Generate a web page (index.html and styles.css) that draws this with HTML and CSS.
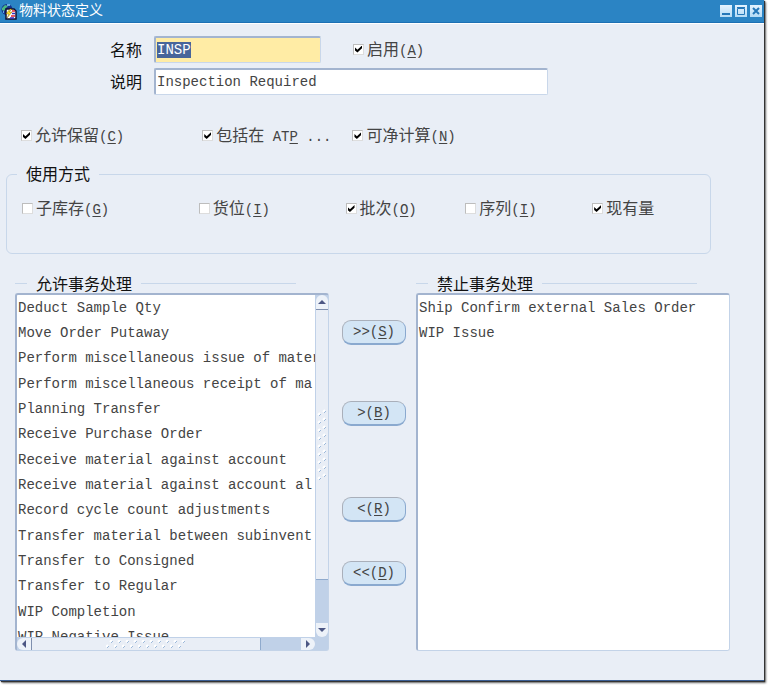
FILE: index.html
```html
<!DOCTYPE html>
<html lang="zh-CN">
<head>
<meta charset="utf-8">
<meta name="viewport" content="width=device-width, initial-scale=1">
<title>物料状态定义</title>
<link rel="stylesheet" href="styles.css">
</head>
<body>
<main class="window">
  <header class="titlebar">
    <svg class="app-icon" viewBox="0 0 16 17" aria-hidden="true">
      <circle cx="6" cy="6.500" r="5.500" fill="#16318c"/>
      <path d="M1 5l3-3 3 1-2 2-2 3-2-1z" fill="#49b882"/>
      <path d="M6 2h3M2 9h1" stroke="#7fd0ff" stroke-width="1.500"/>
      <path d="M5 6h8l2 2v8H5z" fill="#fff" stroke="#101030" stroke-width="1.500"/>
      <path d="M9 6l-4 5h3l-2 4 5-6H8l3-3z" fill="#ffe12b" stroke="#6a5000" stroke-width=".4"/>
      <path d="M11 8h3M10 13h4" stroke="#e02030" stroke-width="1.500"/>
      <path d="M11 10.500h3M9 15h4" stroke="#3030c0" stroke-width="1.300"/>
    </svg>
    <h1 class="title">物料状态定义</h1>
    <div class="window-buttons">
      <button type="button" aria-label="最小化"><svg viewBox="0 0 12 12"><path d="M2 9h8" stroke="#2577b8" stroke-width="2"/></svg></button>
      <button type="button" aria-label="最大化"><svg viewBox="0 0 12 12"><path d="M2.500 3.500h7v6h-7zM2 2.500h8" fill="none" stroke="#2577b8"/></svg></button>
      <button type="button" aria-label="关闭"><svg viewBox="0 0 12 12"><path d="M3 3l6 6M9 3l-6 6" stroke="#2577b8" stroke-width="2"/></svg></button>
    </div>
  </header>

  <form class="content">
    <div class="fields">
      <label class="field-label" for="name">名称</label>
      <div class="field-line">
        <input class="text-field name-field" id="name" type="text" value="INSP">
        <label class="check"><input type="checkbox" checked><span>启用<span class="key">(<u>A</u>)</span></span></label>
      </div>
      <label class="field-label" for="desc">说明</label>
      <input class="text-field" id="desc" type="text" value="Inspection Required">
    </div>

    <div class="options">
      <label class="check"><input type="checkbox" checked><span>允许保留<span class="key">(<u>C</u>)</span></span></label>
      <label class="check"><input type="checkbox" checked><span>包括在<span class="key"> AT<u>P</u> ...</span></span></label>
      <label class="check"><input type="checkbox" checked><span>可净计算<span class="key">(<u>N</u>)</span></span></label>
    </div>

    <fieldset class="usage">
      <legend>使用方式</legend>
      <div class="usage-row">
        <label class="check"><input type="checkbox"><span>子库存<span class="key">(<u>G</u>)</span></span></label>
        <label class="check"><input type="checkbox"><span>货位<span class="key">(<u>I</u>)</span></span></label>
        <label class="check"><input type="checkbox" checked><span>批次<span class="key">(<u>O</u>)</span></span></label>
        <label class="check"><input type="checkbox"><span>序列<span class="key">(<u>I</u>)</span></span></label>
        <label class="check"><input type="checkbox" checked><span>现有量</span></label>
      </div>
    </fieldset>

    <div class="transfer">
      <section class="panel">
        <h2 class="panel-title">允许事务处理</h2>
        <div class="list-box scrolling">
          <ul class="list long-list">
            <li>Deduct Sample Qty</li>
            <li>Move Order Putaway</li>
            <li>Perform miscellaneous issue of mater</li>
            <li>Perform miscellaneous receipt of ma</li>
            <li>Planning Transfer</li>
            <li>Receive Purchase Order</li>
            <li>Receive material against account</li>
            <li>Receive material against account al</li>
            <li>Record cycle count adjustments</li>
            <li>Transfer material between subinvent</li>
            <li>Transfer to Consigned</li>
            <li>Transfer to Regular</li>
            <li>WIP Completion</li>
            <li>WIP Negative Issue</li>
          </ul>
          <div class="bar bar-v">
            <button class="arrow" type="button" aria-label="向上滚动"><svg viewBox="0 0 12 14"><path d="M2 9l4-4 4 4z" fill="#4c5784"/></svg></button>
            <div class="thumb">
              <svg class="grip-v" aria-hidden="true">
                <defs><pattern id="gv" width="10" height="8" patternUnits="userSpaceOnUse"><path d="M1 6l2-2M6 3l2-2" stroke="#fff" stroke-width="2"/><path d="M2 7l2-2M7 4l2-2" stroke="#9db9da"/></pattern></defs>
                <rect width="100%" height="100%" fill="url(#gv)"/>
              </svg>
            </div>
            <div class="track"></div>
            <button class="arrow" type="button" aria-label="向下滚动"><svg viewBox="0 0 12 14"><path d="M2 5h8l-4 4z" fill="#4c5784"/></svg></button>
          </div>
          <div class="bar bar-h">
            <button class="arrow" type="button" aria-label="向左滚动"><svg viewBox="0 0 14 12"><path d="M9 2v8L5 6z" fill="#4c5784"/></svg></button>
            <div class="thumb">
              <svg class="grip-h" aria-hidden="true">
                <defs><pattern id="gh" width="8" height="8" patternUnits="userSpaceOnUse"><path d="M0 7l2-2M4 2l2-2" stroke="#fff" stroke-width="2"/><path d="M1 8l2-2M5 3l2-2" stroke="#9db9da"/></pattern></defs>
                <rect width="100%" height="100%" fill="url(#gh)"/>
              </svg>
            </div>
            <div class="track"></div>
            <button class="arrow" type="button" aria-label="向右滚动"><svg viewBox="0 0 14 12"><path d="M5 2v8l4-4z" fill="#4c5784"/></svg></button>
          </div>
        </div>
      </section>

      <div class="moves">
        <button class="move" type="button">&gt;&gt;(<u>S</u>)</button>
        <button class="move after-all" type="button">&gt;(<u>B</u>)</button>
        <button class="move group-start" type="button">&lt;(<u>R</u>)</button>
        <button class="move back-all" type="button">&lt;&lt;(<u>D</u>)</button>
      </div>

      <section class="panel">
        <h2 class="panel-title">禁止事务处理</h2>
        <div class="list-box">
          <ul class="list">
            <li>Ship Confirm external Sales Order</li>
            <li>WIP Issue</li>
          </ul>
        </div>
      </section>
    </div>
  </form>
</main>
<script src="script.js"></script>
</body>
</html>
```
FILE: styles.css
```css
* {
  box-sizing: border-box;
}

body {
  margin: 0;
  padding: 0 4px 4px 0;
  background: #fff;
  color: #444;
  font: 16px/20px "Liberation Mono", "Noto Sans CJK SC", monospace;
}

h1,
h2,
ul {
  margin: 0;
  padding: 0;
  font-weight: 400;
}

button {
  margin: 0;
  padding: 0;
  border: 0;
  color: inherit;
}

svg {
  display: block;
}

.window {
  display: flex;
  flex-direction: column;
  height: calc(100vh - 4px);
  min-height: 520px;
  background: #e9eef6;
  border-bottom: 1px solid #3c5f94;
  box-shadow: 1px 1px 1px #333, 2px 2px 2px #777;
}

.titlebar {
  display: flex;
  align-items: center;
  gap: 2px;
  height: 23px;
  padding: 0 2px 0 1px;
  background: #2b84c4;
  border-bottom: 1px solid #1d70b4;
  box-shadow: 0 1px #fff;
}

.app-icon {
  width: 16px;
  height: 17px;
}

.title {
  flex: 1;
  color: #fff;
  font-size: 14px;
}

.window-buttons {
  display: flex;
  gap: 3px;
}

.window-buttons button {
  width: 12px;
  height: 12px;
  background: linear-gradient(#e4f3ff, #b5dbf5);
}

.content {
  display: flex;
  flex: 1;
  flex-direction: column;
  min-height: 0;
  padding: 13px 34px 29px 6px;
}

.fields {
  display: grid;
  grid-template-columns: 136px minmax(0, 394px);
  column-gap: 12px;
  row-gap: 5px;
}

.field-label {
  padding-top: 5px;
  color: #111;
  line-height: 22px;
  text-align: right;
}

.field-line {
  display: flex;
  align-items: center;
  gap: 32px;
}

.field-line .check {
  padding-top: 2px;
}

.text-field {
  width: 100%;
  height: 27px;
  padding: 0 2px 1px 1px;
  border: 2px solid #a3b4cf;
  border-right-color: #c9d7ea;
  border-bottom-color: #c9d7ea;
  border-right-width: 1px;
  border-bottom-width: 1px;
  border-radius: 2px;
  outline: 0;
  background: #fff;
  color: #444;
  font: 14px/22px "Liberation Mono", monospace;
}

.name-field {
  width: 167px;
  background: #ffeca5;
}

.text-field::selection {
  background: #48659a;
  color: #fff;
}

.check {
  display: flex;
  align-items: center;
  gap: 3px;
  white-space: nowrap;
}

.check input {
  position: relative;
  appearance: none;
  flex: none;
  width: 11px;
  height: 11px;
  margin: 0 0 3px;
  border: 1px solid #bdbdbd;
  border-right-color: #ddd;
  border-bottom-color: #ddd;
  background: #fff;
}

.check input:checked::before {
  content: "";
  position: absolute;
  inset: 1px;
  background: #000;
  clip-path: polygon(0 30%, 35% 60%, 100% 0, 100% 40%, 35% 100%, 0 70%);
}

.key {
  font-size: 14px;
  white-space: pre;
}

u {
  text-underline-offset: 2px;
}

.options {
  display: grid;
  grid-template-columns: 181fr 150fr 377fr;
  margin-top: 32px;
  padding-left: 15px;
}

.usage {
  min-width: 0;
  margin: 15px 19px 0 0;
  padding: 0 0 33px 15px;
  border: 1px solid #c8d7ea;
  border-radius: 6px;
}

.usage legend {
  margin-left: -5px;
  padding: 4px 9px 0;
  color: #111;
}

.usage-row {
  display: grid;
  grid-template-columns: 177fr 147fr 120fr 127fr 118fr;
  padding-top: 14px;
}

.transfer {
  display: grid;
  flex: 1;
  grid-template-columns: minmax(0, 1fr) 87px minmax(0, 1fr);
  grid-template-rows: minmax(0, 1fr);
  min-height: 0;
  margin: 21px 0 0 9px;
}

.panel {
  display: flex;
  flex-direction: column;
  min-height: 0;
}

.panel-title {
  display: flex;
  align-items: center;
  gap: 9px;
  height: 18px;
  margin-right: 33px;
  padding-top: 3px;
  color: #111;
  font-size: 16px;
}

.panel-title::before,
.panel-title::after {
  content: "";
  width: 12px;
  height: 1px;
  margin-bottom: 4px;
  background: #c8d7ea;
}

.panel-title::after {
  flex: 1;
}

.list-box {
  display: grid;
  flex: 1;
  grid-template-columns: minmax(0, 1fr);
  grid-template-rows: minmax(0, 1fr);
  min-height: 0;
  overflow: hidden;
  border: 1px solid #c3d3e8;
  border-top: 2px solid #a3b4cf;
  border-left: 2px solid #a3b4cf;
  border-radius: 3px;
  background: #fff;
}

.list-box.scrolling {
  grid-template-columns: minmax(0, 1fr) 13px;
  grid-template-rows: minmax(0, 1fr) 13px;
  background: #c0d1e8;
}

.list {
  overflow: hidden;
  padding: 1px 0 0 1px;
  background: #fff;
  font-size: 14px;
  line-height: 25px;
  list-style: none;
  white-space: nowrap;
}

.long-list li:nth-child(3n) {
  margin-bottom: 1px;
}

.bar {
  display: flex;
  background: #c0d1e8;
}

.bar-v {
  flex-direction: column;
  border-left: 1px solid #c0d1e8;
}

.bar-h {
  border-top: 1px solid #c0d1e8;
}

.arrow {
  flex: none;
  background: #edf2f9;
}

.bar-v .arrow {
  width: 12px;
  height: 14px;
  border-radius: 6px 6px 0 0;
}

.bar-v .arrow:last-child {
  border-radius: 0 0 6px 6px;
}

.bar-h .arrow {
  width: 14px;
  height: 12px;
  border-radius: 6px 0 0 6px;
}

.bar-h .arrow:last-child {
  border-radius: 0 6px 6px 0;
}

.thumb {
  display: flex;
  align-items: center;
  justify-content: center;
  background: #e9eef6;
}

.bar-v .thumb {
  flex: 271;
  border-top: 1px solid #7f8fae;
  border-bottom: 1px solid #8faacd;
}

.bar-v .track {
  flex: 43;
}

.bar-h .thumb {
  flex: 231;
  border-left: 1px solid #7f8fae;
  border-right: 1px solid #8faacd;
}

.bar-h .track {
  flex: 40;
}

.grip-v {
  width: 10px;
  height: 72px;
}

.grip-h {
  width: 80px;
  height: 8px;
}

.moves {
  padding: 45px 10px 0 13px;
}

.move {
  display: block;
  width: 100%;
  height: 25px;
  border: 1px solid #a9afba;
  border-right-color: #8aa9cf;
  border-bottom: 2px solid #8aa9cf;
  border-radius: 9px;
  background: #d3e5f5;
  font: 14px/20px "Liberation Mono", monospace;
}

.after-all {
  margin-top: 56px;
}

.group-start {
  margin-top: 71px;
}

.back-all {
  margin-top: 39px;
}
```
FILE: script.js
```js
const nameField = document.getElementById("name");
nameField.focus();
nameField.select();
```
